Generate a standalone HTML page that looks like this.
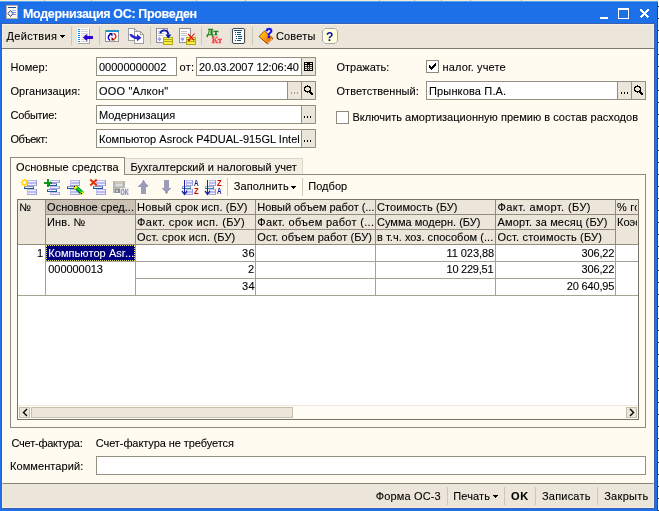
<!DOCTYPE html>
<html lang="ru"><head><meta charset="utf-8"><title>Модернизация ОС: Проведен</title>
<style>
html,body{margin:0;padding:0}
body{width:659px;height:511px;overflow:hidden;background:#fff;position:relative;font-family:"Liberation Sans","DejaVu Sans",sans-serif;font-size:11px}
.a{position:absolute;box-sizing:border-box}
.t{position:absolute;white-space:nowrap;display:block;-webkit-text-stroke:0.1px currentColor}
.fld{position:absolute;box-sizing:border-box;background:#fff;border:1px solid #948F81;height:19px}
.btn{position:absolute;box-sizing:border-box;background:#ECE5D9;border-left:1px solid #948F81;top:0;height:17px;width:14px}
.sep{position:absolute;width:1px;background:#CFC7B8}
.hl{position:absolute;height:1px;background:#918C7E}
.vl{position:absolute;width:1px;background:#918C7E}
.gl{position:absolute;height:1px;background:#A5A194}
.gv{position:absolute;width:1px;background:#A5A194}
.cb{position:absolute;box-sizing:border-box;width:13px;height:13px;background:#fff;border:1px solid #8E8A7C}
svg{position:absolute;overflow:visible}

</style></head><body>
<!-- desktop strip -->
<div class="a" style="left:0;top:0;width:659px;height:1px;background:#F5EAD3"></div>
<div class="a" style="left:44px;top:0;width:1px;height:1px;background:#B9B1A2"></div><div class="a" style="left:91px;top:0;width:1px;height:1px;background:#B9B1A2"></div><div class="a" style="left:196px;top:0;width:1px;height:1px;background:#B9B1A2"></div><div class="a" style="left:245px;top:0;width:1px;height:1px;background:#B9B1A2"></div><div class="a" style="left:379px;top:0;width:1px;height:1px;background:#B9B1A2"></div><div class="a" style="left:414px;top:0;width:1px;height:1px;background:#B9B1A2"></div><div class="a" style="left:441px;top:0;width:1px;height:1px;background:#B9B1A2"></div><div class="a" style="left:470px;top:0;width:1px;height:1px;background:#B9B1A2"></div><div class="a" style="left:521px;top:0;width:1px;height:1px;background:#B9B1A2"></div>
<!-- window frame -->
<div class="a" style="left:0;top:1px;width:658px;height:510px;background:#1E70E9;border-right:1px solid #1248B8"></div>
<div class="a" style="left:0;top:1px;width:658px;height:2px;background:#1A69E6;border-top:1px solid #58A6F6"></div>
<div class="a" style="left:1px;top:23px;width:654px;height:486px;background:#3A5EB0"></div>
<!-- toolbar -->
<div class="a" style="left:2px;top:24px;width:652px;height:24px;background:#ECE5D9;border-top:1px solid #F6F0E2;border-left:1px solid #F6F0E2;border-right:1px solid #F6F0E2"></div>
<div class="a" style="left:2px;top:48px;width:652px;height:1px;background:#7E796D"></div>
<!-- form -->
<div class="a" style="left:2px;top:49px;width:652px;height:434px;background:#FFFBF0"></div>
<div class="a" style="left:658px;top:1px;width:1px;height:510px;background:repeating-linear-gradient(#fff 0,#fff 5px,#333 5px,#333 6px,#fff 6px,#fff 12px)"></div>
<!-- bottom bar -->
<div class="a" style="left:2px;top:483px;width:652px;height:25px;background:#ECE5D9;border-top:1px solid #8A8474;border-left:1px solid #F6F0E2;border-right:1px solid #F6F0E2;border-bottom:1px solid #F6F0E2"></div>
<!-- fields -->
<div class="fld" style="left:96px;top:57px;width:81px"></div>
<div class="fld" style="left:196px;top:57px;width:120px"><div class="btn" style="left:104px"></div></div>
<div class="fld" style="left:96px;top:81px;width:220px"><div class="btn" style="left:190px"></div><div class="btn" style="left:204px"></div></div>
<div class="fld" style="left:96px;top:105px;width:220px"><div class="btn" style="left:204px"></div></div>
<div class="fld" style="left:96px;top:129px;width:220px"><div class="btn" style="left:204px"></div></div>
<div class="fld" style="left:426px;top:81px;width:220px"><div class="btn" style="left:190px"></div><div class="btn" style="left:204px"></div></div>
<div class="fld" style="left:96px;top:456px;width:550px"></div>
<div class="cb" style="left:426px;top:60px"></div>
<div class="cb" style="left:336px;top:111px"></div>
<!-- tabs + panel -->
<div class="a" style="left:10px;top:174px;width:636px;height:254px;border:1px solid #8E8A7C;background:#FFFBF0"></div>
<div class="a" style="left:10px;top:157px;width:115px;height:18px;border:1px solid #8E8A7C;border-bottom:none;background:#FFFBF0"></div>
<div class="a" style="left:125px;top:158px;width:178px;height:16px;border-top:1px solid #DDD7C9;border-right:1px solid #DDD7C9;background:#F4EFE4"></div>
<!-- command bar separators -->
<div class="sep" style="left:227px;top:178px;height:18px"></div>
<div class="sep" style="left:302px;top:178px;height:18px"></div>
<!-- main toolbar separators -->
<div class="sep" style="left:71px;top:27px;height:18px"></div>
<div class="sep" style="left:99px;top:27px;height:18px"></div>
<div class="sep" style="left:150px;top:27px;height:18px"></div>
<div class="sep" style="left:201px;top:27px;height:18px"></div>
<div class="sep" style="left:252px;top:27px;height:18px"></div>
<!-- bottom bar separators -->
<div class="sep" style="left:447px;top:487px;height:18px"></div>
<div class="sep" style="left:504px;top:487px;height:18px"></div>
<div class="sep" style="left:535px;top:487px;height:18px"></div>
<div class="sep" style="left:597px;top:487px;height:18px"></div>
<!-- table -->
<div class="a" style="left:17px;top:199px;width:622px;height:221px;border:1px solid #77736A;background:#fff"></div>
<!-- header bg -->
<div class="a" style="left:18px;top:200px;width:620px;height:44px;background:#ECE5D9"></div>
<div class="a" style="left:46px;top:200px;width:89px;height:14px;background:#C9C2B5"></div>
<!-- header grid -->
<div class="hl" style="left:18px;top:244px;width:620px"></div>
<div class="hl" style="left:46px;top:214px;width:592px"></div>
<div class="hl" style="left:136px;top:229px;width:479px"></div>
<div class="vl" style="left:45px;top:200px;height:45px"></div>
<div class="vl" style="left:135px;top:200px;height:45px"></div>
<div class="vl" style="left:255px;top:200px;height:45px"></div>
<div class="vl" style="left:375px;top:200px;height:45px"></div>
<div class="vl" style="left:495px;top:200px;height:45px"></div>
<div class="vl" style="left:615px;top:200px;height:45px"></div>
<!-- data grid -->
<div class="gl" style="left:46px;top:261px;width:592px"></div>
<div class="gl" style="left:136px;top:278px;width:479px"></div>
<div class="gl" style="left:18px;top:295px;width:620px"></div>
<div class="gv" style="left:45px;top:245px;height:50px"></div>
<div class="gv" style="left:135px;top:245px;height:50px"></div>
<div class="gv" style="left:255px;top:245px;height:50px"></div>
<div class="gv" style="left:375px;top:245px;height:50px"></div>
<div class="gv" style="left:495px;top:245px;height:50px"></div>
<div class="gv" style="left:615px;top:245px;height:50px"></div>
<!-- selected cell -->
<div class="a" style="left:46px;top:245px;width:89px;height:16px;background:#000080;border:1px dotted #E8E060"></div>
<!-- scrollbar -->
<div class="a" style="left:18px;top:405px;width:620px;height:14px;background:#FFFCF3;border-top:1px solid #EFEADF"></div>
<div class="a" style="left:19px;top:407px;width:11px;height:11px;background:#ECE5D9;border:1px solid #C5BFB2"></div>
<div class="a" style="left:31px;top:407px;width:262px;height:11px;background:#ECE5D9;border:1px solid #C5BFB2"></div>
<div class="a" style="left:626px;top:407px;width:11px;height:11px;background:#ECE5D9;border:1px solid #C5BFB2"></div>
<svg width="659" height="511" viewBox="0 0 659 511" style="left:0;top:0;will-change:transform" shape-rendering="crispEdges">
<rect x="6" y="5" width="11" height="13" fill="#FFF9F0" stroke="#B8AC9C" stroke-width="1" transform="translate(.5,.5)"/>
<rect x="8" y="7" width="8" height="1" fill="#1C4C9C" />
<rect x="12" y="10" width="4" height="1" fill="#90C8F0" />
<rect x="12" y="12" width="4" height="1" fill="#A090E0" />
<rect x="12" y="14" width="4" height="1" fill="#A090E0" />
<path d="M8 13.5 L10.5 10.5 L13 13.5 L10.5 16.5 Z" fill="#fff" stroke="#1C3C90" stroke-width="1" shape-rendering="geometricPrecision"/>
<rect x="600" y="17" width="8" height="2" fill="#fff" />
<rect x="618" y="8" width="10" height="10" fill="none" stroke="#fff" stroke-width="1" transform="translate(.5,.5)"/>
<rect x="618" y="8" width="11" height="2" fill="#fff" />
<path d="M640.5 9.5 L648.5 17.5 M648.5 9.5 L640.5 17.5" fill="none" stroke="#fff" stroke-width="2" />
<path d="M60 35 h5 l-2.5 3 Z" fill="#000" stroke="none" stroke-width="1" />
<path d="M291 186 h5 l-2.5 3 Z" fill="#000" stroke="none" stroke-width="1" />
<path d="M493 495 h5 l-2.5 3 Z" fill="#000" stroke="none" stroke-width="1" />
<rect x="304" y="62" width="9" height="9" fill="#000" />
<rect x="305" y="65" width="7" height="5" fill="#F2ECE0" />
<rect x="305" y="63" width="2" height="1" fill="#F2ECE0" />
<rect x="310" y="63" width="2" height="1" fill="#F2ECE0" />
<rect x="307" y="65" width="1" height="5" fill="#111" />
<rect x="309" y="65" width="1" height="5" fill="#111" />
<rect x="305" y="66" width="7" height="1" fill="#333" />
<rect x="305" y="68" width="7" height="1" fill="#555" />
<rect x="291" y="92" width="1" height="2" fill="#A09C8E" />
<rect x="294" y="92" width="1" height="2" fill="#A09C8E" />
<rect x="297" y="92" width="1" height="2" fill="#A09C8E" />
<circle cx="307.5" cy="89" r="3" fill="none" stroke="#000" stroke-width="1.2"/>
<path d="M309.5 91.5 L313 95" fill="none" stroke="#000" stroke-width="2" />
<rect x="304" y="116" width="1" height="2" fill="#000" />
<rect x="307" y="116" width="1" height="2" fill="#000" />
<rect x="310" y="116" width="1" height="2" fill="#000" />
<rect x="304" y="140" width="1" height="2" fill="#000" />
<rect x="307" y="140" width="1" height="2" fill="#000" />
<rect x="310" y="140" width="1" height="2" fill="#000" />
<rect x="621" y="92" width="1" height="2" fill="#000" />
<rect x="624" y="92" width="1" height="2" fill="#000" />
<rect x="627" y="92" width="1" height="2" fill="#000" />
<circle cx="637.5" cy="89" r="3" fill="none" stroke="#000" stroke-width="1.2"/>
<path d="M639.5 91.5 L643 95" fill="none" stroke="#000" stroke-width="2" />
<path d="M429 65 v3 l2 2 l5 -5 v-3 l-5 5 z" fill="#000" stroke="none" stroke-width="1" />
<path d="M27 409 L23.5 412.5 L27 416" fill="none" stroke="#000" stroke-width="1.4" shape-rendering="geometricPrecision"/>
<path d="M630 409 L633.5 412.5 L630 416" fill="none" stroke="#000" stroke-width="1.4" shape-rendering="geometricPrecision"/>
<rect x="78" y="29" width="12" height="15" fill="#A8A8A8" />
<rect x="77" y="28" width="12" height="15" fill="#fff" />
<rect x="78" y="29" width="2" height="1" fill="#1090F0" />
<rect x="81" y="29" width="7" height="1" fill="#D4D4D4" />
<rect x="78" y="31" width="2" height="1" fill="#1090F0" />
<rect x="81" y="31" width="7" height="1" fill="#D4D4D4" />
<rect x="78" y="33" width="2" height="1" fill="#1090F0" />
<rect x="81" y="33" width="7" height="1" fill="#D4D4D4" />
<rect x="78" y="35" width="2" height="1" fill="#1090F0" />
<rect x="81" y="35" width="7" height="1" fill="#D4D4D4" />
<rect x="78" y="37" width="2" height="1" fill="#1090F0" />
<rect x="81" y="37" width="7" height="1" fill="#D4D4D4" />
<rect x="78" y="39" width="2" height="1" fill="#1090F0" />
<rect x="81" y="39" width="7" height="1" fill="#D4D4D4" />
<rect x="78" y="41" width="2" height="1" fill="#1090F0" />
<rect x="81" y="41" width="7" height="1" fill="#D4D4D4" />
<path d="M82.8 37.5 L87.2 33.8 L87.2 36 L93 36 L93 39 L87.2 39 L87.2 41.2 Z" fill="#3000D0" stroke="none" stroke-width="1" shape-rendering="geometricPrecision"/>
<rect x="105" y="30" width="13" height="11" fill="#fff" stroke="#989898" stroke-width="1" transform="translate(.5,.5)"/>
<rect x="106" y="30" width="13" height="2" fill="#2090D0" />
<rect x="105" y="30" width="2" height="1" fill="#20D020" />
<path d="M110 40.5 C107.5 38.5 107.8 35.5 110.5 34.2" fill="none" stroke="#0808C0" stroke-width="1.5" shape-rendering="geometricPrecision"/>
<path d="M109 33 h3.5 v3.5 z" fill="#0808C0" stroke="none" stroke-width="1" shape-rendering="geometricPrecision"/>
<path d="M113.5 33.5 C116.5 34.5 116.5 37.5 114.5 38.8" fill="none" stroke="#F01808" stroke-width="1.4" shape-rendering="geometricPrecision"/>
<path d="M111.5 40.5 v-3.5 l3.8 3.2 z" fill="#900808" stroke="none" stroke-width="1" shape-rendering="geometricPrecision"/>
<path d="M128.5 28.5 h6 l3 3 v9 h-9 z" fill="#fff" stroke="#A0A0A0" stroke-width="1" />
<path d="M134.5 28.5 v3 h3" fill="none" stroke="#A0A0A0" stroke-width="1" />
<path d="M134.5 31.5 h6 l3 3 v9 h-9 z" fill="#fff" stroke="#A0A0A0" stroke-width="1" />
<path d="M140.5 31.5 v3 h3" fill="none" stroke="#A0A0A0" stroke-width="1" />
<path d="M130 35.5 C132 34 133 38.5 137.5 37.8" fill="none" stroke="#2828D0" stroke-width="2.6" shape-rendering="geometricPrecision"/>
<path d="M137 34.3 L141.5 37.8 L137 41.3 Z" fill="#2828D0" stroke="none" stroke-width="1" shape-rendering="geometricPrecision"/>
<rect x="156" y="28" width="11" height="14" fill="#fff" stroke="#909090" stroke-width="1" transform="translate(.5,.5)"/>
<rect x="158" y="31" width="6" height="1" fill="#C4C4C4" />
<rect x="158" y="33" width="6" height="1" fill="#C4C4C4" />
<rect x="158" y="35" width="6" height="1" fill="#C4C4C4" />
<path d="M159.5 37 l2 2 l-2 2.5 l-2 -2.5 z" fill="#9898F8" stroke="none" stroke-width="1" shape-rendering="geometricPrecision"/>
<rect x="163" y="37" width="9" height="7" fill="#F6EE3C" stroke="#B0A820" stroke-width="1" transform="translate(.5,.5)"/>
<rect x="164" y="39" width="8" height="1" fill="#B0A820" />
<rect x="164" y="41" width="8" height="1" fill="#B0A820" />
<path d="M160.3 33.5 C161 29.5 167.5 29 168.5 34.5" fill="none" stroke="#0818B0" stroke-width="1.8" shape-rendering="geometricPrecision"/>
<path d="M165.3 34.6 h6 l-3 3.8 z" fill="#0818B0" stroke="none" stroke-width="1" shape-rendering="geometricPrecision"/>
<rect x="179" y="28" width="11" height="14" fill="#fff" stroke="#909090" stroke-width="1" transform="translate(.5,.5)"/>
<rect x="181" y="31" width="6" height="1" fill="#C4C4C4" />
<rect x="181" y="33" width="6" height="1" fill="#C4C4C4" />
<rect x="181" y="35" width="6" height="1" fill="#C4C4C4" />
<path d="M182.5 37 l2 2 l-2 2.5 l-2 -2.5 z" fill="#9898F8" stroke="none" stroke-width="1" shape-rendering="geometricPrecision"/>
<rect x="186" y="37" width="9" height="7" fill="#F6EE3C" stroke="#B0A820" stroke-width="1" transform="translate(.5,.5)"/>
<rect x="187" y="39" width="8" height="1" fill="#B0A820" />
<rect x="187" y="41" width="8" height="1" fill="#B0A820" />
<path d="M188 34 L194 40.3 M194.5 33.5 L188.5 40.5" fill="none" stroke="#F00000" stroke-width="1.1" shape-rendering="geometricPrecision"/>
<rect x="188" y="39" width="2" height="2" fill="#F00000" />
<text x="206.8" y="35" font-family="Liberation Serif, serif" font-size="9" font-weight="bold" fill="#108010" stroke="#108010" stroke-width=".3" textLength="11.4" lengthAdjust="spacingAndGlyphs">Дт</text>
<text x="211.8" y="43" font-family="Liberation Serif, serif" font-size="9" font-weight="bold" fill="#F84040" stroke="#F84040" stroke-width=".3" textLength="10.2" lengthAdjust="spacingAndGlyphs">Кт</text>
<rect x="230" y="28" width="16" height="16" fill="#D4D4D4" />
<rect x="231" y="28" width="14" height="16" fill="#E6E2DA" />
<rect x="232" y="28" width="12" height="15" fill="#fff" rx="1.5" ry="1.5" stroke="#484848" stroke-width="1" transform="translate(.5,.5)" shape-rendering="geometricPrecision"/>
<rect x="234" y="30" width="8" height="1" fill="#105080" />
<rect x="235" y="32" width="1" height="1" fill="#105080" />
<rect x="237" y="32" width="4" height="1" fill="#105080" />
<rect x="235" y="34" width="1" height="1" fill="#105080" />
<rect x="237" y="34" width="4" height="1" fill="#105080" />
<rect x="236" y="36" width="1" height="1" fill="#105080" />
<rect x="238" y="36" width="4" height="1" fill="#105080" />
<rect x="236" y="38" width="1" height="1" fill="#105080" />
<rect x="238" y="38" width="4" height="1" fill="#105080" />
<rect x="235" y="40" width="1" height="1" fill="#105080" />
<rect x="237" y="40" width="4" height="1" fill="#105080" />
<defs><linearGradient id="bk" x1="0" y1="0" x2="1" y2="1"><stop offset="0" stop-color="#FFE800"/><stop offset=".45" stop-color="#FFA010"/><stop offset="1" stop-color="#E85000"/></linearGradient></defs>
<path d="M259 36.5 L264.5 31 L273 38.5 L267.5 44 Z" fill="url(#bk)" stroke="#A04000" stroke-width="1" shape-rendering="geometricPrecision"/>
<path d="M268.5 43 L272.5 39" fill="none" stroke="#fff" stroke-width="1.4" stroke-dasharray="1 1" shape-rendering="geometricPrecision"/>
<text x="265.2" y="37.9" font-family="Liberation Sans, sans-serif" font-size="14" font-weight="bold" fill="#1010F0" stroke="#1010F0" stroke-width=".5" textLength="7.6" lengthAdjust="spacingAndGlyphs">?</text>
<path d="M325 28.5 h10 l2.5 2.5 v10 l-2.5 2.5 h-10 l-2.5 -2.5 v-10 z" fill="#FFFFD8" stroke="#A8A8B0" stroke-width="1" shape-rendering="geometricPrecision"/>
<text x="326" y="40.8" font-family="Liberation Sans, sans-serif" font-size="13.5" font-weight="bold" fill="#0808A8" textLength="7.4" lengthAdjust="spacingAndGlyphs">?</text>
<rect x="27" y="180" width="10" height="6" fill="#BCBCF0" />
<rect x="28" y="181" width="8" height="1" fill="#F0F0FA" />
<rect x="28" y="184" width="8" height="1" fill="#F0F0FA" />
<rect x="36" y="180" width="1" height="6" fill="#9C9CDC" />
<rect x="27" y="185" width="10" height="1" fill="#A4A4E0" />
<rect x="24" y="186" width="10" height="3" fill="#9090D4" />
<rect x="25" y="187" width="8" height="1" fill="#F0F0FA" />
<rect x="24" y="188" width="10" height="1" fill="#205890" />
<rect x="33" y="187" width="1" height="2" fill="#205890" />
<rect x="24" y="187" width="1" height="2" fill="#205890" />
<rect x="27" y="189" width="10" height="6" fill="#BCBCF0" />
<rect x="28" y="190" width="8" height="1" fill="#F0F0FA" />
<rect x="28" y="193" width="8" height="1" fill="#F0F0FA" />
<rect x="36" y="189" width="1" height="6" fill="#9C9CDC" />
<rect x="27" y="194" width="10" height="1" fill="#A4A4E0" />
<path d="M24.5 179 v7.5 M20.8 182.5 h7.5 M22 180 l5 5 M27 180 l-5 5" fill="none" stroke="#FFD000" stroke-width="1.2" shape-rendering="geometricPrecision"/>
<circle cx="24.5" cy="182.5" r="2" fill="#fff" stroke="#FFD000" stroke-width="1" shape-rendering="geometricPrecision"/>
<rect x="50" y="180" width="10" height="3" fill="#BCBCF0" />
<rect x="51" y="181" width="8" height="1" fill="#F0F0FA" />
<rect x="59" y="180" width="1" height="3" fill="#9C9CDC" />
<rect x="50" y="182" width="10" height="1" fill="#A4A4E0" />
<rect x="49" y="183" width="8" height="3" fill="#9090D4" />
<rect x="50" y="184" width="6" height="1" fill="#F0F0FA" />
<rect x="49" y="185" width="8" height="1" fill="#205890" />
<rect x="56" y="184" width="1" height="2" fill="#205890" />
<rect x="49" y="184" width="1" height="2" fill="#205890" />
<rect x="50" y="186" width="10" height="3" fill="#BCBCF0" />
<rect x="51" y="187" width="8" height="1" fill="#F0F0FA" />
<rect x="59" y="186" width="1" height="3" fill="#9C9CDC" />
<rect x="50" y="188" width="10" height="1" fill="#A4A4E0" />
<rect x="47" y="189" width="10" height="3" fill="#9090D4" />
<rect x="48" y="190" width="8" height="1" fill="#F0F0FA" />
<rect x="47" y="191" width="10" height="1" fill="#205890" />
<rect x="56" y="190" width="1" height="2" fill="#205890" />
<rect x="47" y="190" width="1" height="2" fill="#205890" />
<rect x="50" y="192" width="10" height="3" fill="#BCBCF0" />
<rect x="51" y="193" width="8" height="1" fill="#F0F0FA" />
<rect x="59" y="192" width="1" height="3" fill="#9C9CDC" />
<rect x="50" y="194" width="10" height="1" fill="#A4A4E0" />
<rect x="47" y="179" width="2" height="8" fill="#0C9818" />
<rect x="44" y="182" width="8" height="2" fill="#0C9818" />
<rect x="70" y="180" width="10" height="6" fill="#BCBCF0" />
<rect x="71" y="181" width="8" height="1" fill="#F0F0FA" />
<rect x="71" y="184" width="8" height="1" fill="#F0F0FA" />
<rect x="79" y="180" width="1" height="6" fill="#9C9CDC" />
<rect x="70" y="185" width="10" height="1" fill="#A4A4E0" />
<rect x="67" y="186" width="10" height="3" fill="#9090D4" />
<rect x="68" y="187" width="8" height="1" fill="#F0F0FA" />
<rect x="67" y="188" width="10" height="1" fill="#205890" />
<rect x="76" y="187" width="1" height="2" fill="#205890" />
<rect x="67" y="187" width="1" height="2" fill="#205890" />
<rect x="70" y="189" width="10" height="6" fill="#BCBCF0" />
<rect x="71" y="190" width="8" height="1" fill="#F0F0FA" />
<rect x="71" y="193" width="8" height="1" fill="#F0F0FA" />
<rect x="79" y="189" width="1" height="6" fill="#9C9CDC" />
<rect x="70" y="194" width="10" height="1" fill="#A4A4E0" />
<path d="M75 186.5 L82.5 193.5" fill="none" stroke="#007830" stroke-width="4.2" shape-rendering="geometricPrecision"/>
<path d="M75.3 186.2 L82.8 193.2" fill="none" stroke="#00D838" stroke-width="2.2" shape-rendering="geometricPrecision"/>
<path d="M74.6 186.4 L76.6 188.2" fill="none" stroke="#FFE800" stroke-width="3.4" shape-rendering="geometricPrecision"/>
<path d="M81.2 192.6 L82.6 193.9" fill="none" stroke="#FFE800" stroke-width="3.4" shape-rendering="geometricPrecision"/>
<rect x="74" y="186" width="1" height="1" fill="#000" />
<rect x="81" y="193" width="1" height="1" fill="#000" />
<rect x="96" y="180" width="10" height="6" fill="#BCBCF0" />
<rect x="97" y="181" width="8" height="1" fill="#F0F0FA" />
<rect x="97" y="184" width="8" height="1" fill="#F0F0FA" />
<rect x="105" y="180" width="1" height="6" fill="#9C9CDC" />
<rect x="96" y="185" width="10" height="1" fill="#A4A4E0" />
<rect x="93" y="186" width="10" height="3" fill="#9090D4" />
<rect x="94" y="187" width="8" height="1" fill="#F0F0FA" />
<rect x="93" y="188" width="10" height="1" fill="#205890" />
<rect x="102" y="187" width="1" height="2" fill="#205890" />
<rect x="93" y="187" width="1" height="2" fill="#205890" />
<rect x="96" y="189" width="10" height="6" fill="#BCBCF0" />
<rect x="97" y="190" width="8" height="1" fill="#F0F0FA" />
<rect x="97" y="193" width="8" height="1" fill="#F0F0FA" />
<rect x="105" y="189" width="1" height="6" fill="#9C9CDC" />
<rect x="96" y="194" width="10" height="1" fill="#A4A4E0" />
<path d="M90.3 179.5 L96.7 185.5 M96.7 179.5 L90.3 185.5" fill="none" stroke="#E83000" stroke-width="2" shape-rendering="geometricPrecision"/>
<rect x="113" y="181" width="12" height="12" fill="#B6B6B6" />
<rect x="115" y="181" width="8" height="6" fill="#C8C8B6" />
<rect x="116" y="184" width="6" height="2" fill="#DCDCE4" />
<rect x="115" y="189" width="7" height="4" fill="#8E8E8E" />
<rect x="116" y="190" width="2" height="2" fill="#C8C8C8" />
<rect x="120" y="188" width="9" height="7" fill="#E8E8E6" />
<text x="120.6" y="194.8" font-family="Liberation Sans, sans-serif" font-size="8.5" font-weight="bold" fill="#8484B4" textLength="8" lengthAdjust="spacingAndGlyphs">OK</text>
<path d="M143.5 180 L148.5 186.5 L146 186.5 L146 194 L141 194 L141 186.5 L138.5 186.5 Z" fill="#9C9CB8" stroke="none" stroke-width="1" />
<path d="M166.5 194 L171.5 187.5 L169 187.5 L169 180 L164 180 L164 187.5 L161.5 187.5 Z" fill="#9C9CB8" stroke="none" stroke-width="1" />
<rect x="186" y="180" width="7" height="6" fill="#BCBCF0" />
<rect x="187" y="181" width="5" height="1" fill="#F0F0FA" />
<rect x="187" y="184" width="5" height="1" fill="#F0F0FA" />
<rect x="192" y="180" width="1" height="6" fill="#9C9CDC" />
<rect x="186" y="185" width="7" height="1" fill="#A4A4E0" />
<rect x="186" y="189" width="7" height="6" fill="#BCBCF0" />
<rect x="187" y="190" width="5" height="1" fill="#F0F0FA" />
<rect x="187" y="193" width="5" height="1" fill="#F0F0FA" />
<rect x="192" y="189" width="1" height="6" fill="#9C9CDC" />
<rect x="186" y="194" width="7" height="1" fill="#A4A4E0" />
<rect x="182" y="186" width="9" height="3" fill="#A8A8DC" />
<rect x="183" y="187" width="7" height="1" fill="#F0F0FA" />
<rect x="182" y="188" width="9" height="1" fill="#3888A8" />
<rect x="190" y="187" width="1" height="2" fill="#3888A8" />
<rect x="184" y="180" width="1" height="14" fill="#1820A0" />
<path d="M182 191 L184.5 194.3 L187 191" fill="none" stroke="#1820A0" stroke-width="1.3" shape-rendering="geometricPrecision"/>
<text x="194" y="186" font-family="Liberation Sans, sans-serif" font-size="8.5" font-weight="bold" fill="#181890" textLength="4.6" lengthAdjust="spacingAndGlyphs">A</text>
<text x="194" y="194" font-family="Liberation Sans, sans-serif" font-size="8.5" font-weight="bold" fill="#D00000" textLength="4.6" lengthAdjust="spacingAndGlyphs">Z</text>
<rect x="209" y="180" width="7" height="6" fill="#BCBCF0" />
<rect x="210" y="181" width="5" height="1" fill="#F0F0FA" />
<rect x="210" y="184" width="5" height="1" fill="#F0F0FA" />
<rect x="215" y="180" width="1" height="6" fill="#9C9CDC" />
<rect x="209" y="185" width="7" height="1" fill="#A4A4E0" />
<rect x="209" y="189" width="7" height="6" fill="#BCBCF0" />
<rect x="210" y="190" width="5" height="1" fill="#F0F0FA" />
<rect x="210" y="193" width="5" height="1" fill="#F0F0FA" />
<rect x="215" y="189" width="1" height="6" fill="#9C9CDC" />
<rect x="209" y="194" width="7" height="1" fill="#A4A4E0" />
<rect x="205" y="186" width="9" height="3" fill="#A8A8DC" />
<rect x="206" y="187" width="7" height="1" fill="#F0F0FA" />
<rect x="205" y="188" width="9" height="1" fill="#3888A8" />
<rect x="213" y="187" width="1" height="2" fill="#3888A8" />
<rect x="207" y="180" width="1" height="14" fill="#1820A0" />
<path d="M205 191 L207.5 194.3 L210 191" fill="none" stroke="#1820A0" stroke-width="1.3" shape-rendering="geometricPrecision"/>
<text x="217" y="186" font-family="Liberation Sans, sans-serif" font-size="8.5" font-weight="bold" fill="#D00000" textLength="4.6" lengthAdjust="spacingAndGlyphs">Z</text>
<text x="217" y="194" font-family="Liberation Sans, sans-serif" font-size="8.5" font-weight="bold" fill="#181890" textLength="4.6" lengthAdjust="spacingAndGlyphs">A</text>
</svg>
<div id="tl" style="position:absolute;left:0;top:0;width:659px;height:511px;will-change:transform">
<span class="t" style="left:23.00px;top:7px;font-size:12.5px;line-height:15px;letter-spacing:-0.341px;color:#fff;font-weight:bold;">Модернизация ОС: Проведен</span>
<span class="t" style="left:6.50px;top:30px;font-size:11px;line-height:13px;letter-spacing:0.325px;color:#000;">Действия</span>
<span class="t" style="left:275.90px;top:30px;font-size:11px;line-height:13px;letter-spacing:0.203px;color:#000;">Советы</span>
<span class="t" style="left:10.50px;top:61px;font-size:11px;line-height:13px;letter-spacing:0.063px;color:#000;">Номер:</span>
<span class="t" style="left:10.50px;top:85px;font-size:11px;line-height:13px;letter-spacing:0.033px;color:#000;">Организация:</span>
<span class="t" style="left:10.50px;top:109px;font-size:11px;line-height:13px;letter-spacing:-0.291px;color:#000;">Событие:</span>
<span class="t" style="left:10.50px;top:133px;font-size:11px;line-height:13px;letter-spacing:-0.531px;color:#000;">Объект:</span>
<span class="t" style="left:99.00px;top:61px;font-size:11px;line-height:13px;letter-spacing:0.000px;color:#000;">00000000002</span>
<span class="t" style="left:179.50px;top:61px;font-size:11px;line-height:13px;letter-spacing:0.272px;color:#000;">от:</span>
<span class="t" style="left:199.00px;top:61px;font-size:11px;line-height:13px;letter-spacing:-0.060px;color:#000;">20.03.2007 12:06:40</span>
<span class="t" style="left:99.00px;top:85px;font-size:11px;line-height:13px;letter-spacing:0.171px;color:#000;">ООО "Алкон"</span>
<span class="t" style="left:99.00px;top:109px;font-size:11px;line-height:13px;letter-spacing:0.058px;color:#000;">Модернизация</span>
<span class="t" style="left:99.00px;top:133px;font-size:11px;line-height:13px;letter-spacing:0.034px;color:#000;">Компьютор Asrock P4DUAL-915GL Intel</span>
<span class="t" style="left:336.50px;top:61px;font-size:11px;line-height:13px;letter-spacing:-0.010px;color:#000;">Отражать:</span>
<span class="t" style="left:442.50px;top:61px;font-size:11px;line-height:13px;letter-spacing:0.137px;color:#000;">налог. учете</span>
<span class="t" style="left:336.50px;top:85px;font-size:11px;line-height:13px;letter-spacing:0.048px;color:#000;">Ответственный:</span>
<span class="t" style="left:429.00px;top:85px;font-size:11px;line-height:13px;letter-spacing:0.153px;color:#000;">Прынкова П.А.</span>
<span class="t" style="left:352.50px;top:111px;font-size:11px;line-height:13px;letter-spacing:0.020px;color:#000;">Включить амортизационную премию в состав расходов</span>
<span class="t" style="left:16.00px;top:161px;font-size:11px;line-height:13px;letter-spacing:0.074px;color:#000;">Основные средства</span>
<span class="t" style="left:130.50px;top:161px;font-size:11px;line-height:13px;letter-spacing:0.009px;color:#000;">Бухгалтерский и налоговый учет</span>
<span class="t" style="left:233.70px;top:180px;font-size:11px;line-height:13px;letter-spacing:0.120px;color:#000;">Заполнить</span>
<span class="t" style="left:308.20px;top:180px;font-size:11px;line-height:13px;letter-spacing:0.058px;color:#000;">Подбор</span>
<span class="t" style="left:19.20px;top:201px;font-size:11px;line-height:13px;letter-spacing:0.288px;color:#000;">№</span>
<span class="t" style="left:47.10px;top:201px;font-size:11px;line-height:13px;letter-spacing:0.022px;color:#000;">Основное сред...</span>
<span class="t" style="left:47.10px;top:216px;font-size:11px;line-height:13px;letter-spacing:0.075px;color:#000;">Инв. №</span>
<span class="t" style="left:137.10px;top:201px;font-size:11px;line-height:13px;letter-spacing:0.149px;color:#000;">Новый срок исп. (БУ)</span>
<span class="t" style="left:137.10px;top:216px;font-size:11px;line-height:13px;letter-spacing:0.402px;color:#000;">Факт. срок исп. (БУ)</span>
<span class="t" style="left:137.10px;top:231px;font-size:11px;line-height:13px;letter-spacing:0.200px;color:#000;">Ост. срок исп. (БУ)</span>
<span class="t" style="left:257.30px;top:201px;font-size:11px;line-height:13px;letter-spacing:-0.046px;color:#000;">Новый объем работ (...</span>
<span class="t" style="left:257.30px;top:216px;font-size:11px;line-height:13px;letter-spacing:0.302px;color:#000;">Факт. объем работ (...</span>
<span class="t" style="left:257.30px;top:231px;font-size:11px;line-height:13px;letter-spacing:0.062px;color:#000;">Ост. объем работ (БУ)</span>
<span class="t" style="left:377.00px;top:201px;font-size:11px;line-height:13px;letter-spacing:0.082px;color:#000;">Стоимость (БУ)</span>
<span class="t" style="left:377.00px;top:216px;font-size:11px;line-height:13px;letter-spacing:0.020px;color:#000;">Сумма модерн. (БУ)</span>
<span class="t" style="left:377.00px;top:231px;font-size:11px;line-height:13px;letter-spacing:0.039px;color:#000;">в т.ч. хоз. способом (...</span>
<span class="t" style="left:497.50px;top:201px;font-size:11px;line-height:13px;letter-spacing:0.422px;color:#000;">Факт. аморт. (БУ)</span>
<span class="t" style="left:497.50px;top:216px;font-size:11px;line-height:13px;letter-spacing:0.159px;color:#000;">Аморт. за месяц (БУ)</span>
<span class="t" style="left:497.50px;top:231px;font-size:11px;line-height:13px;letter-spacing:0.192px;color:#000;">Ост. стоимость (БУ)</span>
<span class="t" style="left:616.90px;top:201px;font-size:11px;line-height:13px;letter-spacing:0.280px;color:#000;width:20.6px;overflow:hidden;">% год</span>
<span class="t" style="left:616.90px;top:216px;font-size:11px;line-height:13px;letter-spacing:0.100px;color:#000;width:20.6px;overflow:hidden;">Коэф</span>
<span class="t" style="left:37.00px;top:247px;font-size:11px;line-height:13px;letter-spacing:0.975px;color:#000;">1</span>
<span class="t" style="left:48.30px;top:247px;font-size:11px;line-height:13px;letter-spacing:0.059px;color:#fff;">Компьютор Asr...</span>
<span class="t" style="left:48.30px;top:263px;font-size:11px;line-height:13px;letter-spacing:-0.062px;color:#000;">000000013</span>
<span class="t" style="left:242.00px;top:247px;font-size:11px;line-height:13px;letter-spacing:0.275px;color:#000;">36</span>
<span class="t" style="left:248.00px;top:263px;font-size:11px;line-height:13px;letter-spacing:0.675px;color:#000;">2</span>
<span class="t" style="left:242.00px;top:280px;font-size:11px;line-height:13px;letter-spacing:0.275px;color:#000;">34</span>
<span class="t" style="left:446.50px;top:247px;font-size:11px;line-height:13px;letter-spacing:-0.064px;color:#000;">11 023,88</span>
<span class="t" style="left:446.50px;top:263px;font-size:11px;line-height:13px;letter-spacing:-0.238px;color:#000;">10 229,51</span>
<span class="t" style="left:581.50px;top:247px;font-size:11px;line-height:13px;letter-spacing:-0.143px;color:#000;">306,22</span>
<span class="t" style="left:581.50px;top:263px;font-size:11px;line-height:13px;letter-spacing:-0.143px;color:#000;">306,22</span>
<span class="t" style="left:566.70px;top:280px;font-size:11px;line-height:13px;letter-spacing:-0.149px;color:#000;">20 640,95</span>
<span class="t" style="left:11.50px;top:437px;font-size:11px;line-height:13px;letter-spacing:-0.223px;color:#000;">Счет-фактура:</span>
<span class="t" style="left:95.75px;top:437px;font-size:11px;line-height:13px;letter-spacing:-0.074px;color:#000;">Счет-фактура не требуется</span>
<span class="t" style="left:10.00px;top:460px;font-size:11px;line-height:13px;letter-spacing:0.080px;color:#000;">Комментарий:</span>
<span class="t" style="left:375.75px;top:490px;font-size:11px;line-height:13px;letter-spacing:0.142px;color:#000;">Форма ОС-3</span>
<span class="t" style="left:453.25px;top:490px;font-size:11px;line-height:13px;letter-spacing:0.126px;color:#000;">Печать</span>
<span class="t" style="left:510.90px;top:490px;font-size:11px;line-height:13px;letter-spacing:0.750px;color:#000;font-weight:bold;">OK</span>
<span class="t" style="left:542.00px;top:490px;font-size:11px;line-height:13px;letter-spacing:0.198px;color:#000;">Записать</span>
<span class="t" style="left:604.20px;top:490px;font-size:11px;line-height:13px;letter-spacing:0.289px;color:#000;">Закрыть</span>
</div>
</body></html>
